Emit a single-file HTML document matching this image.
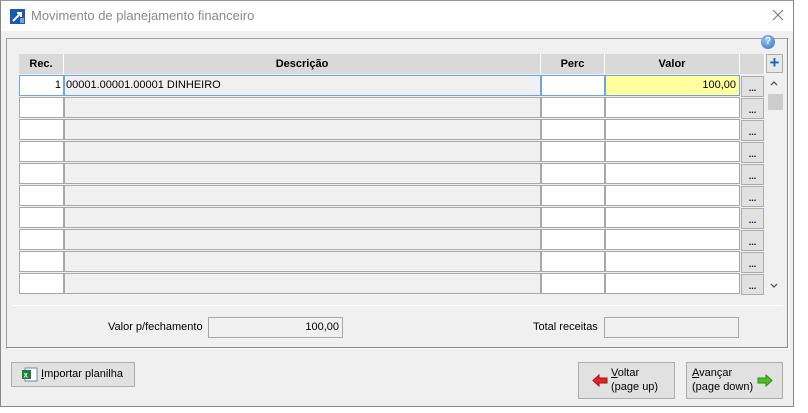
<!DOCTYPE html>
<html><head><meta charset="utf-8"><style>
*{box-sizing:border-box;margin:0;padding:0}
body{width:808px;height:413px;background:#fff;position:relative;overflow:hidden;font-family:"Liberation Sans",sans-serif;font-size:11px;color:#000}
.a{position:absolute}
.win{left:0;top:0;width:794px;height:407px;background:#f0f0f0;border:1px solid #888;border-top:1px solid #999}
.title{left:1px;top:1px;width:792px;height:30px;background:#fff}
.panel{left:6px;top:38px;width:783px;height:311px;border:1px solid #a0a0a0;border-right-color:#fff;border-bottom-color:#fff;box-shadow:inset -1px -1px 0 #888}
.hd{background:#d9d9d9;border-right:1px solid #fff;font-weight:bold;text-align:center;line-height:20px;height:20px;top:54px}
.c{height:21px;border:1px solid #a8a8a8;background:#fff}
.g{background:#f0f0f0}
.btn{border:1px solid #adadad;background:#e1e1e1}
.dot{width:23px;height:21px;text-align:center;font-weight:bold;line-height:22px;font-size:9px;color:#000040}
</style></head><body>
<div class="a win"></div>
<div class="a title"></div>
<svg class="a" style="left:10px;top:9px" width="15" height="15"><rect width="15" height="15" fill="#1a5ab0"/><path d="M3 12 L11 4 M7 4 H11 V8" stroke="#fff" stroke-width="2" fill="none"/><rect x="10" y="9" width="4" height="5" fill="#7aa0d8"/></svg>
<div class="a" style="left:31px;top:8px;font-size:13px;color:#888">Movimento de planejamento financeiro</div>
<svg class="a" style="left:772px;top:9px" width="12" height="12"><path d="M1 1 L11 11 M11 1 L1 11" stroke="#777" stroke-width="1.1"/></svg>
<div class="a panel"></div>
<div class="a" style="left:761px;top:35px;width:14px;height:14px;border-radius:50%;background:radial-gradient(circle at 40% 35%,#9cc6f2,#2c6fc4);color:#fff;font-weight:bold;font-size:10px;text-align:center;line-height:14px">?</div>
<div class="a hd" style="left:19px;width:45px">Rec.</div>
<div class="a hd" style="left:64px;width:477px">Descrição</div>
<div class="a hd" style="left:541px;width:64px">Perc</div>
<div class="a hd" style="left:605px;width:135px">Valor</div>
<div class="a hd" style="left:740px;width:25px"></div>
<div class="a" style="left:766px;top:54px;width:17px;height:19px;border:1px solid #adadad;background:#e8e8e8;color:#1565c0;font-weight:bold;font-size:17px;text-align:center;line-height:16px">+</div>
<svg class="a" style="left:770px;top:80px" width="8" height="6"><path d="M1 5 L4 2 L7 5" stroke="#555" stroke-width="1.3" fill="none"/></svg>
<div class="a" style="left:768px;top:94px;width:15px;height:16px;background:#cdcdcd"></div>
<svg class="a" style="left:770px;top:283px" width="8" height="6"><path d="M1 1 L4 4 L7 1" stroke="#555" stroke-width="1.3" fill="none"/></svg>
<div id="rows"></div>
<script>
let h='';for(let i=0;i<10;i++){let y=75+i*22;let f=i==0;
h+=`<div class="a c" style="left:19px;top:${y}px;width:45px;text-align:right;padding-right:2px;line-height:19px;${f?'border-color:#6aa6e6':''}">${f?'1':''}</div>`;
h+=`<div class="a c g" style="left:64px;top:${y}px;width:477px;line-height:19px;padding-left:1px;${f?'border-color:#6aa6e6':''}">${f?'00001.00001.00001 DINHEIRO':''}</div>`;
h+=`<div class="a c" style="left:541px;top:${y}px;width:64px;${f?'border-color:#6aa6e6':''}"></div>`;
h+=`<div class="a c" style="left:605px;top:${y}px;width:135px;text-align:right;padding-right:3px;line-height:19px;${f?'background:#ffff9e;border-color:#6aa6e6':''}">${f?'100,00':''}</div>`;
h+=`<div class="a btn dot" style="left:741px;top:${y+1}px">...</div>`;}
document.getElementById('rows').innerHTML=h;
</script>
<div class="a" style="left:12px;top:305px;width:771px;height:1px;background:#a0a0a0;border-bottom:1px solid #fff"></div>
<div class="a" style="left:108px;top:321px">Valor p/fechamento</div>
<div class="a" style="left:208px;top:317px;width:135px;height:21px;border:1px solid #a8a8a8;text-align:right;padding-right:3px;line-height:19px">100,00</div>
<div class="a" style="left:533px;top:321px">Total receitas</div>
<div class="a" style="left:604px;top:317px;width:135px;height:21px;border:1px solid #a8a8a8"></div>
<div class="a btn" style="left:11px;top:362px;width:124px;height:25px"></div>
<svg class="a" style="left:22px;top:367px" width="16" height="15"><rect x="3" y="1" width="12" height="13" fill="#fff" stroke="#6a8ab0"/><rect x="0" y="3" width="9" height="9" fill="#1e7b3a"/><text x="1.5" y="10.5" font-size="8" fill="#fff" font-family="Liberation Sans" font-weight="bold">x</text></svg>
<div class="a" style="left:41px;top:368px"><u>I</u>mportar planilha</div>
<div class="a btn" style="left:578px;top:362px;width:97px;height:37px"></div>
<svg class="a" style="left:592px;top:374px" width="16" height="13"><path d="M1 6.5 L7 1 V4 H15 V9 H7 V12 Z" fill="#e8202a" stroke="#a01010"/></svg>
<div class="a" style="left:611px;top:366px;line-height:14px"><u>V</u>oltar<br>(page up)</div>
<div class="a btn" style="left:686px;top:362px;width:97px;height:37px"></div>
<div class="a" style="left:692px;top:366px;line-height:14px"><u>A</u>vançar<br>(page down)</div>
<svg class="a" style="left:757px;top:374px" width="16" height="13"><path d="M15 6.5 L9 1 V4 H1 V9 H9 V12 Z" fill="#4cc02a" stroke="#2a8a10"/></svg>
</body></html>
